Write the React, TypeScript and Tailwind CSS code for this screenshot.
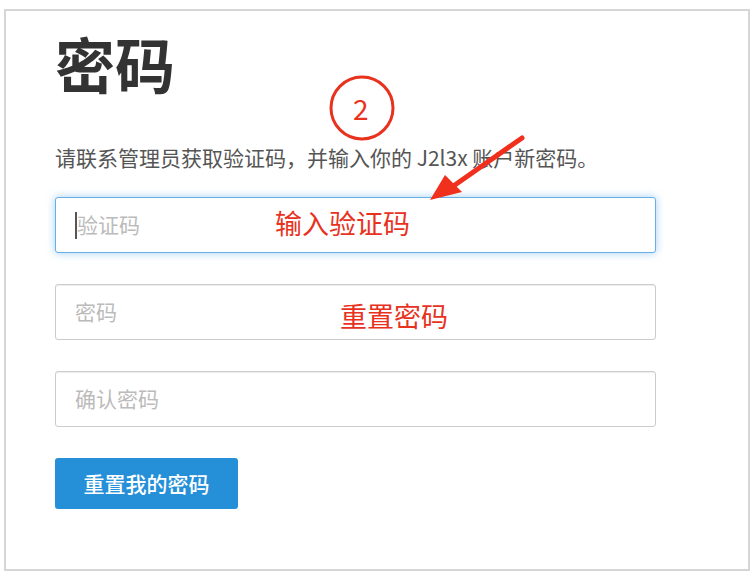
const App = () => {
  const font = { fontFamily: '"Noto Sans CJK SC", "Noto Sans", sans-serif' }

  return (
    <div className="relative h-[578px] w-[756px] bg-white" style={font}>
      <div className="ml-[4px] mt-[9px] h-[562px] w-[746px] border-2 border-[#d6d6d6] pl-[49px] pt-[14px]">
        <h1 className="text-[60px] font-bold leading-[76px] text-[#333]">密码</h1>

        <p className="mt-[42px] text-[21px] leading-[28px] text-[#555]">
          请联系管理员获取验证码，并输入你的 J2l3x 账户新密码。
        </p>

        <div className="mt-[26px] flex w-[601px] flex-col gap-[31px]">
          <div className="flex h-[56px] items-center rounded-[3px] border border-[#66afe9] bg-white px-[19px] shadow-[0_0_8px_rgba(102,175,233,0.6)]">
            <span className="h-[27px] w-[2px] bg-[#555]" />
            <span className="text-[21px] text-[#bbb]">验证码</span>
          </div>
          <div className="flex h-[56px] items-center rounded-[3px] border border-[#ccc] bg-white px-[19px] shadow-[inset_0_1px_1px_rgba(0,0,0,0.075)]">
            <span className="text-[21px] text-[#bbb]">密码</span>
          </div>
          <div className="flex h-[56px] items-center rounded-[3px] border border-[#ccc] bg-white px-[19px] shadow-[inset_0_1px_1px_rgba(0,0,0,0.075)]">
            <span className="text-[21px] text-[#bbb]">确认密码</span>
          </div>
        </div>

        <button className="mt-[31px] flex h-[51px] w-[183px] items-center justify-center rounded-[3px] bg-[#2590d8] text-[21px] font-medium text-white">
          重置我的密码
        </button>
      </div>

      {/* annotations */}
      <svg className="absolute left-0 top-0" width="756" height="578">
        <circle cx="362" cy="99" r="31" fill="none" stroke="#e8321e" strokeWidth="3" />
        <line x1="522" y1="129" x2="452" y2="178" stroke="#f0301c" strokeWidth="5" strokeLinecap="round" />
        <polygon points="430,191 445,166 462,183" fill="#f0301c" />
      </svg>
      <span className="absolute left-[353px] top-[81px] text-[28px] leading-[36px] text-[#e8321e]">2</span>
      <span className="absolute left-[275px] top-[195px] text-[27px] leading-[38px] text-[#e8321e]">输入验证码</span>
      <span className="absolute left-[340px] top-[288px] text-[27px] leading-[38px] text-[#e8321e]">重置密码</span>
    </div>
  )
}

export default App
